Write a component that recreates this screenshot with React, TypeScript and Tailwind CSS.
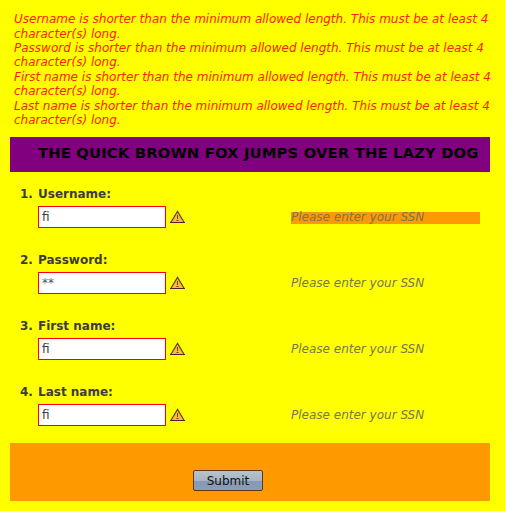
type Field = { label: string; value: string; highlighted?: boolean; masked?: boolean };

const fields: Field[] = [
  { label: 'Username', value: 'fi', highlighted: true },
  { label: 'Password', value: '**', masked: true },
  { label: 'First name', value: 'fi' },
  { label: 'Last name', value: 'fi' },
];

function WarningIcon() {
  return (
    <svg width="15" height="14" viewBox="0 0 15 14" className="ml-1 shrink-0">
      <path d="M7.5 1.4 14.2 12.5H0.8Z" fill="#fbbc34" stroke="#54401f" strokeWidth="1.15" />
      <path d="M0 12.5h15" stroke="#4a2430" strokeWidth="1" />
      <path d="M7.5 5v4M6.5 10.5h2" stroke="#6a4414" strokeWidth="1" fill="none" />
    </svg>
  );
}

function FieldRow({ field, index }: { field: Field; index: number }) {
  return (
    <li className="flex h-[66px] flex-col">
      <label className="flex h-[14px] font-bold leading-[14px] text-[#3c3c3c]">
        <span className="w-[28px] pl-[10px]">{index + 1}.</span>
        <span>{field.label}:</span>
      </label>
      <div className="mt-[5px] flex h-[22px] items-center pl-[28px]">
        <input
          type="text"
          defaultValue={field.value}
          className={`h-[22px] w-[128px] border border-[#ff0000] bg-white px-[3px] text-[12px] outline-none ${
            field.masked ? 'text-[#555555]' : 'text-[#3c3c3c]'
          }`}
        />
        <WarningIcon />
        <div
          className={`mr-[10px] ml-auto mt-[2px] h-[12px] w-[189px] italic leading-[10px] text-[#787850] ${
            field.highlighted ? 'bg-[#ff9900]' : ''
          }`}
        >
          Please enter your SSN
        </div>
      </div>
    </li>
  );
}

export default function App() {
  return (
    <main className="h-[511px] w-[505px] overflow-hidden bg-[#ffff00] px-[10px] pt-[12px] font-['DejaVu_Sans',sans-serif] text-[12px]">
      <div className="h-[125px] w-[490px] pt-[0.15px] pl-1 italic leading-[14.4px] text-[#ff2200]">
        {fields.map((field) => (
          <p key={field.label}>
            {field.label} is shorter than the minimum allowed length. This must be at least 4
            character(s) long.
          </p>
        ))}
      </div>
      <form className="w-[480px]" onSubmit={(event) => event.preventDefault()}>
        <h1 className="h-[35px] bg-[#800080] pl-[28px] text-[14.8px] font-bold leading-[32px] tracking-[0.14px] whitespace-nowrap text-black">
          THE QUICK BROWN FOX JUMPS OVER THE LAZY DOG
        </h1>
        <ol className="h-[271px] pt-[15px]">
          {fields.map((field, index) => (
            <FieldRow key={field.label} field={field} index={index} />
          ))}
        </ol>
        <div className="h-[58px] bg-[#ff9900] pt-[27px] pl-[183px]">
          <button className="block h-[21px] w-[70px] rounded-[2px] border border-[#5c3914] bg-[linear-gradient(#b6c4ca_0%,#a6b5c1_50%,#8799b3_51%,#8a9db9_100%)] pt-px text-[12px] leading-[19px] text-[#111]">
            Submit
          </button>
        </div>
      </form>
    </main>
  );
}
